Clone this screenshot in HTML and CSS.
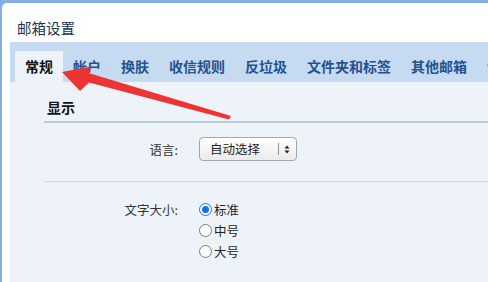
FILE: index.html
```html
<!DOCTYPE html>
<html lang="zh">
<head>
<meta charset="utf-8">
<title>邮箱设置</title>
<link rel="stylesheet" href="styles.css">
</head>
<body>
<div class="window">
  <div class="title">邮箱设置</div>
  <div class="tabs">
    <div class="tab active">常规</div>
    <div class="tab">帐户</div>
    <div class="tab">换肤</div>
    <div class="tab">收信规则</div>
    <div class="tab">反垃圾</div>
    <div class="tab">文件夹和标签</div>
    <div class="tab">其他邮箱</div>
    <div class="tab">设置</div>
  </div>
  <div class="content">
    <div class="section">
      <div class="section-head">显示</div>
      <div class="row row-lang">
        <div class="label">语言:</div>
        <div class="control">
          <div class="select">
            <span class="select-text">自动选择</span>
            <span class="select-div"></span>
            <svg class="select-arrow" width="6" height="9" viewBox="0 0 6 9"><path d="M3 0.5 L5.5 3.5 L0.5 3.5 Z M3 8.5 L5.5 5.5 L0.5 5.5 Z" fill="#222"/></svg>
          </div>
        </div>
      </div>
      <div class="row row-size">
        <div class="label">文字大小:</div>
        <div class="control options">
          <div class="opt"><span class="radio checked"></span>标准</div>
          <div class="opt"><span class="radio"></span>中号</div>
          <div class="opt"><span class="radio"></span>大号</div>
        </div>
      </div>
    </div>
  </div>
</div>
<svg class="arrow" width="488" height="282" viewBox="0 0 488 282">
  <polygon points="62,72 91,66.5 88.5,73 231,116 229,119.5 89,82.5 80,91" fill="#ee3333"/>
</svg>
</body>
</html>
```
FILE: styles.css
```css
html, body {
  margin: 0;
  padding: 0;
}
body {
  background: #86ace0;
  width: 488px;
  height: 282px;
  overflow: hidden;
  position: relative;
  font-family: "Noto Sans CJK SC", "Noto Sans", sans-serif;
}
.window {
  margin: 3px 0 0 2px;
  background: #ffffff;
  border-top-left-radius: 5px;
  height: 279px;
  width: 600px;
  padding-left: 8px;
  box-sizing: border-box;
  display: flex;
  flex-direction: column;
}
.title {
  height: 39px;
  padding: 15px 0 0 7px;
  line-height: 20px;
  font-size: 14.5px;
  color: #1d3452;
  box-sizing: border-box;
}
.tabs {
  height: 40px;
  background: #c6daf2;
  display: flex;
  align-items: flex-end;
  padding-left: 5px;
  white-space: nowrap;
}
.tab {
  height: 31px;
  line-height: 31px;
  padding: 0 10px;
  font-size: 14px;
  font-weight: bold;
  color: #23528e;
}
.tab.active {
  background: #eef3fa;
  color: #111111;
}
.content {
  flex: 1;
  background: #eef3fa;
  padding: 15px 0 0 34px;
}
.section-head {
  line-height: 20px;
  font-size: 14px;
  font-weight: bold;
  color: #111;
  padding: 0 0 4px 3px;
  border-bottom: 2px solid #b8cce2;
}
.row {
  display: flex;
  align-items: flex-start;
  font-size: 12.5px;
  color: #333;
}
.row-lang {
  padding: 14px 0 20px;
  border-bottom: 1px solid #ccd8e6;
  align-items: center;
}
.row-size {
  padding-top: 17px;
}
.label {
  width: 134px;
  text-align: right;
  margin-right: 21px;
  line-height: 21px;
}
.select {
  width: 98px;
  height: 24px;
  box-sizing: border-box;
  border: 1px solid #a6a6a6;
  border-radius: 4px;
  background: linear-gradient(#ffffff, #ebebeb);
  display: flex;
  align-items: center;
  padding-left: 10px;
  color: #222;
}
.select-text {
  line-height: 22px;
  flex: 1;
}
.select-div {
  width: 1px;
  height: 12px;
  background: #8f8f8f;
  margin-right: 5px;
}
.select-arrow {
  margin-right: 6px;
}
.options {
  display: flex;
  flex-direction: column;
}
.opt {
  display: flex;
  align-items: center;
  height: 21px;
  color: #222;
}
.radio {
  width: 13px;
  height: 13px;
  box-sizing: border-box;
  border: 1px solid #7a7a7a;
  border-radius: 50%;
  background: #fff;
  margin-right: 2px;
  position: relative;
}
.radio.checked {
  border-color: #1a73e8;
}
.radio.checked::after {
  content: "";
  position: absolute;
  left: 2px;
  top: 2px;
  width: 7px;
  height: 7px;
  border-radius: 50%;
  background: #1a6fe6;
}
.arrow {
  position: absolute;
  left: 0;
  top: 0;
  pointer-events: none;
}
```
